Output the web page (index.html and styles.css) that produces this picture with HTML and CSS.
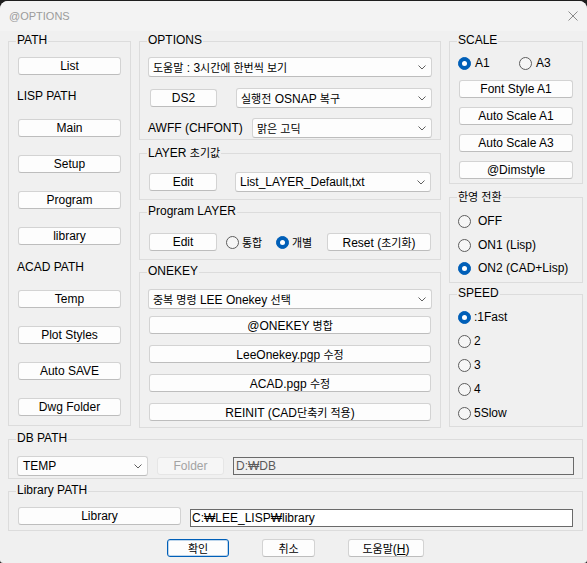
FILE: index.html
```html
<!DOCTYPE html>
<html lang="ko">
<head>
<meta charset="utf-8">
<title>@OPTIONS</title>
<link rel="stylesheet" href="styles.css">
</head>
<body>
<div class="window">
  <div class="titlebar">
    <span class="title">@OPTIONS</span>
    <svg class="close" width="10" height="10" viewBox="0 0 10 10"><path d="M0.5 0.5 L9.5 9.5 M9.5 0.5 L0.5 9.5" stroke="#8a8a8a" stroke-width="1" fill="none"/></svg>
  </div>
  <div class="content">
    <div class="top">
      <!-- PATH -->
      <div class="group g-path">
        <div class="legend">PATH</div>
        <div class="btn pbtn m9">List</div>
        <div class="plabel m14">LISP PATH</div>
        <div class="btn pbtn m16">Main</div>
        <div class="btn pbtn m18">Setup</div>
        <div class="btn pbtn m18">Program</div>
        <div class="btn pbtn m18">library</div>
        <div class="plabel m15">ACAD PATH</div>
        <div class="btn pbtn m16">Temp</div>
        <div class="btn pbtn m18">Plot Styles</div>
        <div class="btn pbtn m18">Auto SAVE</div>
        <div class="btn pbtn m18">Dwg Folder</div>
      </div>

      <!-- MIDDLE -->
      <div class="col col-mid">
        <div class="group g-options">
          <div class="legend">OPTIONS</div>
          <div class="combo combo-full m9"><span class="ctext"><span class="ko">도움말</span> : 3<span class="ko">시간에 한번씩 보기</span></span><svg class="chev" width="8" height="5" viewBox="0 0 8 5"><path d="M0.5 0.5 L4 4 L7.5 0.5" stroke="#606060" fill="none"/></svg></div>
          <div class="row m11">
            <div class="btn b-ds2">DS2</div>
            <div class="combo c-osnap"><span class="ctext"><span class="ko">실행전</span> OSNAP <span class="ko">복구</span></span><svg class="chev" width="8" height="5" viewBox="0 0 8 5"><path d="M0.5 0.5 L4 4 L7.5 0.5" stroke="#606060" fill="none"/></svg></div>
          </div>
          <div class="row m10">
            <span class="rlabel">AWFF (CHFONT)</span>
            <div class="combo c-font"><span class="ctext"><span class="ko">맑은 고딕</span></span><svg class="chev" width="8" height="5" viewBox="0 0 8 5"><path d="M0.5 0.5 L4 4 L7.5 0.5" stroke="#606060" fill="none"/></svg></div>
          </div>
        </div>

        <div class="group g-layer">
          <div class="legend">LAYER <span class="ko">초기값</span></div>
          <div class="row m12">
            <div class="btn b-edit">Edit</div>
            <div class="combo c-layer"><span class="ctext">List_LAYER_Default,txt</span><svg class="chev" width="8" height="5" viewBox="0 0 8 5"><path d="M0.5 0.5 L4 4 L7.5 0.5" stroke="#606060" fill="none"/></svg></div>
          </div>
        </div>

        <div class="group g-prog">
          <div class="legend">Program LAYER</div>
          <div class="row m13">
            <div class="btn b-edit">Edit</div>
            <span class="radio r-tong"></span><span class="rtext ko">통합</span>
            <span class="radio on r-gae"></span><span class="rtext ko">개별</span>
            <div class="btn b-reset">Reset (<span class="ko">초기화</span>)</div>
          </div>
        </div>

        <div class="group g-onekey">
          <div class="legend">ONEKEY</div>
          <div class="combo combo-full m10"><span class="ctext"><span class="ko">중복 명령</span> LEE Onekey <span class="ko">선택</span></span><svg class="chev" width="8" height="5" viewBox="0 0 8 5"><path d="M0.5 0.5 L4 4 L7.5 0.5" stroke="#606060" fill="none"/></svg></div>
          <div class="btn obtn m7">@ONEKEY <span class="ko">병합</span></div>
          <div class="btn obtn m11">LeeOnekey.pgp <span class="ko">수정</span></div>
          <div class="btn obtn m11">ACAD.pgp <span class="ko">수정</span></div>
          <div class="btn obtn m11">REINIT (CAD<span class="ko">단축키 적용</span>)</div>
        </div>
      </div>

      <!-- RIGHT -->
      <div class="col col-right">
        <div class="group g-scale">
          <div class="legend">SCALE</div>
          <div class="srow m8">
            <span class="sopt"><span class="radio on"></span><span class="stext">A1</span></span>
            <span class="sopt"><span class="radio"></span><span class="stext">A3</span></span>
          </div>
          <div class="btn sbtn m10">Font Style A1</div>
          <div class="btn sbtn m9">Auto Scale A1</div>
          <div class="btn sbtn m9">Auto Scale A3</div>
          <div class="btn sbtn m9">@Dimstyle</div>
        </div>

        <div class="group g-han">
          <div class="legend"><span class="ko">한영 전환</span></div>
          <div class="ropt wide m9"><span class="radio"></span><span>OFF</span></div>
          <div class="ropt wide m8"><span class="radio"></span><span>ON1 (Lisp)</span></div>
          <div class="ropt wide m7"><span class="radio on"></span><span>ON2 (CAD+Lisp)</span></div>
        </div>

        <div class="group g-speed">
          <div class="legend">SPEED</div>
          <div class="ropt m8"><span class="radio on"></span><span>:1Fast</span></div>
          <div class="ropt m8"><span class="radio"></span><span>2</span></div>
          <div class="ropt m8"><span class="radio"></span><span>3</span></div>
          <div class="ropt m8"><span class="radio"></span><span>4</span></div>
          <div class="ropt m8"><span class="radio"></span><span>5Slow</span></div>
        </div>
      </div>
    </div>

    <div class="group g-db">
      <div class="legend">DB PATH</div>
      <div class="row m10">
        <div class="combo c-temp"><span class="ctext">TEMP</span><svg class="chev" width="8" height="5" viewBox="0 0 8 5"><path d="M0.5 0.5 L4 4 L7.5 0.5" stroke="#606060" fill="none"/></svg></div>
        <div class="btn b-folder disabled">Folder</div>
        <div class="field f-db">D:₩DB</div>
      </div>
    </div>

    <div class="group g-lib">
      <div class="legend">Library PATH</div>
      <div class="row row-lib m9">
        <div class="btn b-lib">Library</div>
        <div class="field f-lib">C:₩LEE_LISP₩library</div>
      </div>
    </div>

    <div class="actions">
      <div class="btn a-ok default"><span class="ko">확인</span></div>
      <div class="btn a-cancel"><span class="ko">취소</span></div>
      <div class="btn a-help"><span class="ko">도움말</span>(<u>H</u>)</div>
    </div>
  </div>
</div>
</body>
</html>
```

FILE: styles.css
```css
* { box-sizing: border-box; }

html, body {
  margin: 0;
  padding: 0;
  background: #1e1e1e;
  width: 587px;
  height: 563px;
  overflow: hidden;
}

body {
  font-family: "Liberation Sans", "Noto Sans CJK KR", sans-serif;
  font-size: 12px;
  color: #000;
}

.ko {
  font-family: "Noto Sans CJK KR", "Liberation Sans", sans-serif;
  font-size: 11px;
}

.window {
  margin-top: 1px;
  width: 587px;
  height: 562px;
  background: #f0f0f0;
  border-radius: 8px 8px 3px 3px;
  overflow: hidden;
}

.titlebar {
  height: 30px;
  display: flex;
  align-items: center;
  justify-content: space-between;
  padding: 0 9px 0 9px;
  background: #f3f3f3;
}

.title {
  font-size: 11px;
  color: #9b9b9b;
  line-height: 14px;
}

.close { display: block; margin-top: -1px; }

.content {
  padding: 0 4px 0 8px;
}

.top {
  display: flex;
  align-items: flex-start;
  gap: 8px;
  margin-top: 10px;
}

.col {
  display: flex;
  flex-direction: column;
}

.col-mid { width: 302px; }
.col-right { width: 134px; }

/* group box */
.group {
  border: 1px solid #dcdcdc;
  display: flex;
  flex-direction: column;
  align-items: flex-start;
}

.legend {
  margin: -9px 0 0 7px;
  padding: 0 1px;
  height: 15px;
  line-height: 15px;
  background: #f0f0f0;
  white-space: nowrap;
}

/* spacing helpers */
.m7 { margin-top: 7px; }
.m8 { margin-top: 8px; }
.m9 { margin-top: 9px; }
.m10 { margin-top: 10px; }
.m11 { margin-top: 11px; }
.m12 { margin-top: 12px; }
.m13 { margin-top: 13px; }
.m14 { margin-top: 14px; }
.m15 { margin-top: 15px; }
.m16 { margin-top: 16px; }
.m18 { margin-top: 18px; }

/* buttons */
.btn {
  height: 18px;
  line-height: 16px;
  text-align: center;
  background: #fdfdfd;
  border: 1px solid #d3d3d3;
  border-bottom-color: #bdbdbd;
  border-radius: 3px;
  white-space: nowrap;
  color: #000;
}

.btn.disabled {
  background: #f6f6f6;
  border-color: #e6e6e6;
  color: #a3a3a3;
}

.btn.default {
  border-color: #005fb8;
  box-shadow: inset 0 0 0 1px rgba(0, 95, 184, 0.25);
}

/* combos */
.combo {
  height: 20px;
  display: flex;
  align-items: center;
  justify-content: space-between;
  padding: 0 5px 0 4px;
  background: #fdfdfd;
  border: 1px solid #d3d3d3;
  border-bottom-color: #bdbdbd;
  border-radius: 3px;
  white-space: nowrap;
  line-height: 18px;
}

.chev { display: block; flex: none; }

.row {
  display: flex;
  align-items: center;
  height: 20px;
}

/* text fields */
.field {
  height: 18px;
  line-height: 16px;
  padding: 0 2px;
  border: 1px solid #6a6a6a;
  white-space: nowrap;
}

/* PATH group */
.g-path {
  width: 123px;
  padding-bottom: 9px;
}

.pbtn {
  width: 103px;
  margin-left: 9px;
}

.plabel {
  height: 14px;
  line-height: 14px;
  margin-left: 8px;
}

/* OPTIONS group */
.g-options { width: 302px; padding-bottom: 1px; }

.combo-full {
  width: 284px;
  margin-left: 8px;
}

.b-ds2 { width: 67px; margin-left: 10px; }
.c-osnap { width: 196px; margin-left: 19px; }
.rlabel { margin-left: 8px; width: 104px; line-height: 14px; }
.c-font { width: 180px; }

/* LAYER */
.g-layer { width: 302px; margin-top: 13px; padding-bottom: 7px; }
.b-edit { width: 68px; margin-left: 9px; }
.c-layer { width: 196px; margin-left: 18px; }

/* Program LAYER */
.g-prog { width: 302px; margin-top: 12px; padding-bottom: 7px; }

.radio {
  display: inline-block;
  flex: none;
  width: 13px;
  height: 13px;
  border-radius: 50%;
  border: 1px solid #5d5d5d;
  background: #f6f6f6;
  position: relative;
}

.radio.on {
  background: #005fb8;
  border-color: #005fb8;
}

.radio.on::after {
  content: "";
  position: absolute;
  left: 3px;
  top: 3px;
  width: 5px;
  height: 5px;
  border-radius: 50%;
  background: #fff;
}

.r-tong { margin-left: 9px; }
.r-gae { margin-left: 11px; }
.rtext { margin-left: 3px; width: 23px; line-height: 14px; }
.b-reset { width: 104px; margin-left: 12px; }

/* ONEKEY */
.g-onekey { width: 302px; margin-top: 12px; padding-bottom: 6px; }
.obtn { width: 282px; margin-left: 9px; }

/* SCALE */
.g-scale { width: 134px; padding-bottom: 4px; }

.srow {
  display: flex;
  height: 14px;
  align-items: center;
  margin-left: 8px;
}

.sopt {
  display: flex;
  align-items: center;
  width: 61px;
}

.stext { margin-left: 4px; line-height: 14px; }

.sbtn { width: 114px; margin-left: 9px; }

/* radio groups */
.g-han { width: 134px; margin-top: 13px; padding-bottom: 6px; }
.g-speed { width: 134px; margin-top: 11px; padding-bottom: 5px; }

.ropt {
  display: flex;
  align-items: center;
  height: 16px;
  margin-left: 8px;
  gap: 3px;
  white-space: nowrap;
}

.ropt.wide { gap: 7px; }

/* DB PATH */
.g-db {
  width: 575px;
  margin-top: 11px;
  padding-bottom: 2px;
}

.c-temp { width: 131px; margin-left: 8px; padding-left: 5px; }
.b-folder { width: 67px; margin-left: 9px; }
.f-db {
  width: 341px;
  margin-left: 9px;
  background: #f0f0f0;
  color: #5a5a5a;
}

/* Library PATH */
.g-lib {
  width: 575px;
  margin-top: 12px;
  padding-bottom: 3px;
}

.row-lib { align-items: flex-start; }
.b-lib { width: 163px; margin-left: 9px; }
.f-lib {
  width: 383px;
  margin-left: 9px;
  margin-top: 2px;
  background: #fff;
  padding: 0 1px;
}

/* bottom actions */
.actions {
  display: flex;
  margin-top: 8px;
  margin-left: 159px;
  gap: 33px;
}

.a-ok { width: 62px; }
.a-cancel { width: 53px; }
.a-help { width: 76px; }
```
